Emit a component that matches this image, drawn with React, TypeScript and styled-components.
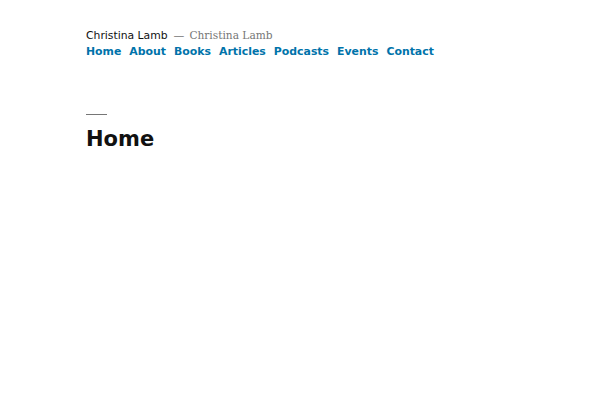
import styled, { createGlobalStyle } from "styled-components";

const Global = createGlobalStyle`
  body {
    margin: 0;
    background: #fff;
    font-family: "DejaVu Sans", sans-serif;
  }
`;

const Page = styled.div`
  padding: 27px 86px 0;
`;

const Branding = styled.div`
  display: flex;
  align-items: baseline;
  font-size: 10.8px;
  line-height: 16px;
`;

const SiteTitle = styled.span`
  color: #111;
`;

const Dash = styled.span`
  color: #767676;
  margin: 0 5px 0 6px;
`;

const Tagline = styled.span`
  color: #767676;
  font-family: "DejaVu Serif", serif;
  font-size: 10.6px;
`;

const Nav = styled.nav`
  display: flex;
  gap: 8px;
`;

const NavLink = styled.a`
  color: #0073aa;
  font-weight: bold;
  font-size: 10.9px;
  line-height: 16px;
  text-decoration: none;
`;

const Entry = styled.div`
  margin-top: 54px;
`;

const Rule = styled.div`
  width: 21px;
  height: 1px;
  background: #767676;
`;

const Title = styled.h1`
  margin: 10px 0 0;
  font-size: 21px;
  line-height: 28px;
  font-weight: bold;
  color: #111;
`;

const links = ["Home", "About", "Books", "Articles", "Podcasts", "Events", "Contact"];

export default function App() {
  return (
    <Page>
      <Global />
      <Branding>
        <SiteTitle>Christina Lamb</SiteTitle>
        <Dash>—</Dash>
        <Tagline>Christina Lamb</Tagline>
      </Branding>
      <Nav>
        {links.map((l) => (
          <NavLink key={l} href="#">{l}</NavLink>
        ))}
      </Nav>
      <Entry>
        <Rule />
        <Title>Home</Title>
      </Entry>
    </Page>
  );
}
